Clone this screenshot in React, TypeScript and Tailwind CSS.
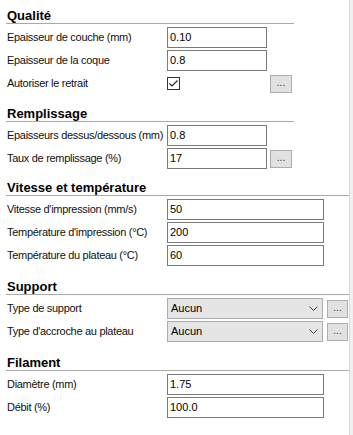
import React from "react";

const font = "font-['Liberation_Sans',Arial,sans-serif]";

function Header({ title, wide }: { title: string; wide?: boolean }) {
  return (
    <div
      className={`h-[24px] flex items-end border-b border-[#a9a9a9] pl-[1px] ${
        wide ? "w-[343px]" : "w-[288px]"
      }`}
    >
      <span className="text-[13px] leading-[15px] font-bold text-black">{title}</span>
    </div>
  );
}

function Label({ text }: { text: string }) {
  return (
    <div className="w-[161px] pl-[1px] text-[11px] tracking-[-0.3px] text-[#111] whitespace-nowrap leading-[13px]">
      {text}
    </div>
  );
}

function Dots({ w }: { w: string }) {
  return (
    <div
      className={`${w} h-[18px] bg-[#e1e1e1] border border-[#adadad] flex items-center justify-center text-[10px] leading-[10px] text-[#333] pb-[1px]`}
    >
      ...
    </div>
  );
}

function InputRow({
  label,
  value,
  wide,
  button,
}: {
  label: string;
  value: string;
  wide?: boolean;
  button?: boolean;
}) {
  return (
    <div className="flex items-center h-[21px]">
      <Label text={label} />
      <div
        className={`${
          wide ? "w-[157px]" : "w-[100px]"
        } h-[21px] border border-[#7a7a7a] bg-white pl-[2px] flex items-center text-[11px] text-black leading-[13px]`}
      >
        {value}
      </div>
      {button && (
        <div className="ml-[3px]">
          <Dots w="w-[22px]" />
        </div>
      )}
    </div>
  );
}

function SelectRow({ label, value }: { label: string; value: string }) {
  return (
    <div className="flex items-center h-[21px]">
      <Label text={label} />
      <div className="w-[156px] h-[21px] border border-[#acacac] bg-[#e5e5e5] pl-[3px] pr-[4px] flex items-center justify-between text-[11px] text-black leading-[13px]">
        <span>{value}</span>
        <svg width="9" height="5" viewBox="0 0 9 5" className="mr-[0px]">
          <polyline points="0.5,0.5 4.5,4.5 8.5,0.5" fill="none" stroke="#444" strokeWidth="1" />
        </svg>
      </div>
      <div className="ml-[4px]">
        <Dots w="w-[21px]" />
      </div>
    </div>
  );
}

export default function App() {
  return (
    <div className={`w-[353px] h-[435px] bg-white flex ${font}`}>
      <div className="w-[349px] pl-[6px] flex flex-col">
        {/* Qualité */}
        <Header title="Qualité" />
        <div className="mt-[3px] flex flex-col gap-[2px]">
          <InputRow label="Epaisseur de couche (mm)" value="0.10" />
          <InputRow label="Epaisseur de la coque" value="0.8" />
          <div className="flex items-center h-[21px]">
            <Label text="Autoriser le retrait" />
            <div className="w-[100px] flex items-center">
              <div className="w-[13px] h-[13px] border border-[#333] bg-white flex items-center justify-center">
                <svg width="11" height="11" viewBox="0 0 11 11">
                  <polyline points="1.5,5.5 4,8 9.5,2.5" fill="none" stroke="#222" strokeWidth="1.1" />
                </svg>
              </div>
            </div>
            <div className="ml-[3px]">
              <Dots w="w-[22px]" />
            </div>
          </div>
        </div>

        {/* Remplissage */}
        <div className="mt-[4px]">
          <Header title="Remplissage" />
        </div>
        <div className="mt-[3px] flex flex-col gap-[2px]">
          <InputRow label="Epaisseurs dessus/dessous (mm)" value="0.8" />
          <InputRow label="Taux de remplissage (%)" value="17" button />
        </div>

        {/* Vitesse */}
        <div className="mt-[3px]">
          <Header title="Vitesse et température" wide />
        </div>
        <div className="mt-[3px] flex flex-col gap-[2px]">
          <InputRow label="Vitesse d'impression (mm/s)" value="50" wide />
          <InputRow label="Température d'impression (°C)" value="200" wide />
          <InputRow label="Température du plateau (°C)" value="60" wide />
        </div>

        {/* Support */}
        <div className="mt-[5px]">
          <Header title="Support" wide />
        </div>
        <div className="mt-[3px] flex flex-col gap-[2px]">
          <SelectRow label="Type de support" value="Aucun" />
          <SelectRow label="Type d'accroche au plateau" value="Aucun" />
        </div>

        {/* Filament */}
        <div className="mt-[5px]">
          <Header title="Filament" wide />
        </div>
        <div className="mt-[3px] flex flex-col gap-[2px]">
          <InputRow label="Diamètre (mm)" value="1.75" wide />
          <InputRow label="Débit (%)" value="100.0" wide />
        </div>
      </div>
      <div className="w-[4px] h-full border-l border-[#d9d9d9] bg-[#f0f0f0]" />
    </div>
  );
}
